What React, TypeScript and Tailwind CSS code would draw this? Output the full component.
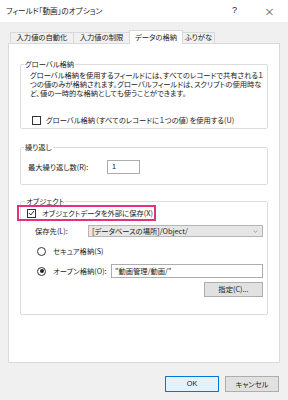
import React from 'react';

const Checkbox = ({ checked = false }: { checked?: boolean }) => (
  <div className="w-[9px] h-[9px] border border-[#333] bg-white flex items-center justify-center shrink-0">
    {checked && (
      <svg viewBox="0 0 10 10" className="w-[8px] h-[8px]">
        <path d="M1.5 5.2 L4 7.8 L8.6 2" fill="none" stroke="#222" strokeWidth={1.4} />
      </svg>
    )}
  </div>
);

const Radio = ({ checked = false }: { checked?: boolean }) => (
  <div className="w-[9px] h-[9px] rounded-full border border-[#333] bg-white flex items-center justify-center shrink-0">
    {checked && <div className="w-[4px] h-[4px] rounded-full bg-[#222]" />}
  </div>
);

export default function App() {
  return (
    <div className="w-[288px] h-[400px] bg-[#f0f0f0] flex flex-col overflow-hidden text-[#222] font-['Noto_Sans_CJK_JP',sans-serif] [font-feature-settings:'palt'] whitespace-nowrap">
      {/* title bar */}
      <div className="h-[22px] shrink-0 bg-white flex items-center pl-[6px] text-[7.6px]">
        <span className="flex-1">フィールド「動画」のオプション</span>
        <span className="text-[9px] font-['Liberation_Sans',sans-serif]">?</span>
        <span className="ml-[27px] mr-[13px] text-[13px] leading-none font-['DejaVu_Sans',sans-serif] font-light text-[#333]">×</span>
      </div>

      {/* tabs */}
      <div className="mt-[8px] ml-[10px] h-[13px] shrink-0 flex items-end text-[7.3px]">
        <div className="w-[64px] h-[11px] border border-b-0 border-[#d9d9d9] bg-[#f0f0f0] flex items-center justify-center leading-none">入力値の自動化</div>
        <div className="w-[57px] h-[11px] -ml-px border border-b-0 border-[#d9d9d9] bg-[#f0f0f0] flex items-center justify-center leading-none">入力値の制限</div>
        <div className="relative z-10 w-[54px] h-[14px] -ml-px -mb-px border border-b-0 border-[#d9d9d9] bg-white flex items-center justify-center leading-none">データの格納</div>
        <div className="w-[33px] h-[11px] -ml-px border border-b-0 border-[#d9d9d9] bg-[#f0f0f0] flex items-center justify-center leading-none">ふりがな</div>
      </div>

      {/* panel */}
      <div className="mx-[8px] h-[320px] shrink-0 bg-white border border-[#d9d9d9] px-[11px] text-[7.3px]">
        {/* グローバル格納 */}
        <fieldset className="mt-[15px] border border-[#dcdcdc] rounded-[2px]">
          <legend className="ml-[3px] px-[1px] leading-[10px]">グローバル格納</legend>
          <div className="pl-[9px] pb-[3px]">
            <p className="mt-[2px] leading-[9px]">
              グローバル格納を使用するフィールドには、すべてのレコードで共有される１
              <br />
              つの値のみが格納されます。グローバルフィールドは、スクリプトの使用時な
              <br />
              ど、値の一時的な格納としても使うことができます。
            </p>
            <div className="mt-[17px] h-[10px] flex items-center pl-[2px] gap-[5px]">
              <Checkbox />
              <span>グローバル格納（すべてのレコードに１つの値）を使用する(U)</span>
            </div>
          </div>
        </fieldset>

        {/* 繰り返し */}
        <fieldset className="mt-[13px] border border-[#dcdcdc] rounded-[2px]">
          <legend className="ml-[3px] px-[1px] leading-[10px]">繰り返し</legend>
          <div className="mt-[8px] pb-[10px] pl-[7px] flex items-center">
            <span className="w-[79px]">最大繰り返し数(R):</span>
            <div className="w-[33px] h-[14px] border border-[#adadad] flex items-center pl-[4px] font-['Liberation_Sans',sans-serif]">1</div>
          </div>
        </fieldset>

        {/* オブジェクト */}
        <fieldset className="mt-[11px] border border-[#dcdcdc] rounded-[2px]">
          <legend className="ml-[4px] px-[1px] leading-[10px]">オブジェクト</legend>
          <div className="pb-[17px]">
            <div className="-mt-px -ml-[4px] w-[139px] h-[16px] border-2 border-[#e4317f] flex items-center pl-[8px] gap-[6px]">
              <Checkbox checked />
              <span>オブジェクトデータを外部に保存(X)</span>
            </div>

            <div className="mt-[4px] mr-[4px] h-[12px] flex items-center pl-[14px]">
              <span className="w-[53px]">保存先(L):</span>
              <div className="flex-1 h-[12px] bg-[#e6e6e6] border border-[#b5b5b5] flex items-center pl-[3px] pr-[4px]">
                <span className="flex-1">[データベースの場所]/Object/</span>
                <svg viewBox="0 0 8 5" className="w-[5px] h-[3px]">
                  <path d="M1 1 L4 4 L7 1" fill="none" stroke="#777" strokeWidth={1} />
                </svg>
              </div>
            </div>

            <div className="mt-[9px] h-[10px] flex items-center pl-[16px] gap-[7px]">
              <Radio />
              <span>セキュア格納(S)</span>
            </div>

            <div className="mt-[8px] mr-[4px] h-[14px] flex items-center pl-[16px]">
              <Radio checked />
              <span className="ml-[7px] w-[58px]">オープン格納(O):</span>
              <div className="flex-1 h-[14px] border border-[#adadad] flex items-center pl-[3px]">"動画管理/動画/"</div>
            </div>

            <div className="mt-[4px] mr-[4px] flex justify-end">
              <div className="w-[59px] h-[15px] bg-[#e1e1e1] border border-[#adadad] flex items-center justify-center">指定(C)...</div>
            </div>
          </div>
        </fieldset>
      </div>

      {/* footer buttons */}
      <div className="mt-[13px] pr-[9px] flex justify-end gap-[6px] text-[7.3px]">
        <div className="w-[54px] h-[16px] bg-[#e5f1fb] border border-[#0078d7] flex items-center justify-center font-['Liberation_Sans',sans-serif]">OK</div>
        <div className="w-[54px] h-[16px] bg-[#e1e1e1] border border-[#adadad] flex items-center justify-center">キャンセル</div>
      </div>
    </div>
  );
}
